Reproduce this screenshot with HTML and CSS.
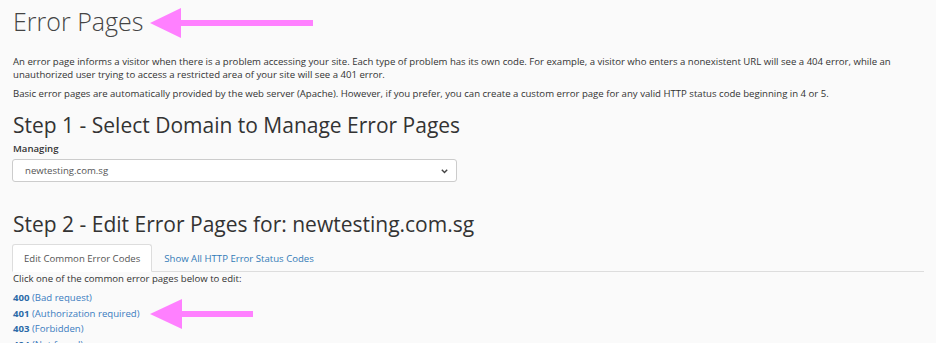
FILE: index.html
```html
<!DOCTYPE html>
<html lang="en">
<head>
    <meta charset="UTF-8">
    <meta name="viewport" content="width=device-width, initial-scale=1.0">
    <title>Error Pages</title>
    <link rel="stylesheet" href="styles.css">
</head>
<body>
    <div class="page">
        <div class="title-row">
            <h1 class="page-title">Error Pages</h1>
            <svg class="arrow arrow-title" width="165" height="30" viewBox="0 0 165 30">
                <polygon points="0,15 31,0 31,12 163,12 163,18 31,18 31,30" fill="#ff80ff"/>
            </svg>
        </div>

        <p class="intro">An error page informs a visitor when there is a problem accessing your site. Each type of problem has its own code. For example, a visitor who enters a nonexistent URL will see a 404 error, while an unauthorized user trying to access a restricted area of your site will see a 401 error.</p>
        <p class="intro">Basic error pages are automatically provided by the web server (Apache). However, if you prefer, you can create a custom error page for any valid HTTP status code beginning in 4 or 5.</p>

        <h2 class="step-title">Step 1 - Select Domain to Manage Error Pages</h2>
        <label class="field-label" for="domain">Managing</label>
        <div class="select-wrap">
            <select class="domain-select" id="domain">
                <option>newtesting.com.sg</option>
            </select>
            <svg class="chevron" width="7" height="5" viewBox="0 0 7 5">
                <path d="M0.8 0.8 L3.5 3.6 L6.2 0.8" fill="none" stroke="#444" stroke-width="1.4"/>
            </svg>
        </div>

        <h2 class="step-title step-two">Step 2 - Edit Error Pages for: newtesting.com.sg</h2>
        <ul class="tabs">
            <li class="tab active">Edit Common Error Codes</li>
            <li class="tab">Show All HTTP Error Status Codes</li>
        </ul>

        <p class="hint">Click one of the common error pages below to edit:</p>
        <ul class="codes">
            <li><a href="#"><b>400</b> (Bad request)</a></li>
            <li class="code-row">
                <a href="#"><b>401</b> (Authorization required)</a>
                <svg class="arrow arrow-code" width="104" height="30" viewBox="0 0 104 30">
                    <polygon points="0,15 32,0 32,12 103,12 103,18 32,18 32,30" fill="#ff80ff"/>
                </svg>
            </li>
            <li><a href="#"><b>403</b> (Forbidden)</a></li>
            <li><a href="#"><b>404</b> (Not found)</a></li>
            <li><a href="#"><b>500</b> (Internal server error)</a></li>
        </ul>
    </div>
</body>
</html>
```

FILE: styles.css
```css
* {
    margin: 0;
    padding: 0;
    box-sizing: border-box;
}

body {
    font-family: 'Open Sans', 'Noto Sans', sans-serif;
    background: #fafafa;
    color: #333;
    font-size: 10px;
    overflow: hidden;
}

.page {
    padding: 0 12px 0 13px;
}

.title-row {
    position: relative;
    height: 44px;
    padding-top: 5px;
}

.page-title {
    font-size: 25px;
    font-weight: 300;
    color: #444;
    line-height: 32px;
}

.arrow {
    position: absolute;
}

.arrow-title {
    left: 137px;
    top: 8px;
}

.intro {
    font-size: 9.6px;
    line-height: 13px;
    margin-top: 11px;
    margin-bottom: 6px;
    color: #333;
}

.intro + .intro {
    margin-top: 0;
}

.step-title {
    font-size: 21px;
    font-weight: 400;
    color: #333;
    line-height: 28px;
    margin-top: 11px;
}

.step-two {
    margin-top: 28px;
}

.field-label {
    display: block;
    font-size: 9.6px;
    font-weight: 600;
    line-height: 14px;
    margin-top: 3px;
}

.select-wrap {
    position: relative;
    width: 445px;
    margin-top: 3px;
    margin-left: -1px;
}

.domain-select {
    appearance: none;
    width: 100%;
    height: 23px;
    padding: 0 12px;
    font-family: inherit;
    font-size: 9.6px;
    color: #555;
    background: #fff;
    border: 1px solid #ccc;
    border-radius: 3px;
}

.chevron {
    position: absolute;
    right: 9px;
    top: 10px;
}

.tabs {
    list-style: none;
    display: flex;
    margin-top: 6px;
    margin-left: -1px;
    border-bottom: 1px solid #ddd;
}

.tab {
    padding: 0 11px;
    height: 28px;
    line-height: 28px;
    font-size: 9.6px;
    color: #337ab7;
    border: 1px solid transparent;
    border-radius: 3px 3px 0 0;
    margin-bottom: -1px;
}

.tab.active {
    background: #fff;
    color: #555;
    border-color: #ddd;
    border-bottom-color: #fff;
}

.hint {
    font-size: 9.6px;
    line-height: 14px;
    margin-top: 0;
}

.codes {
    list-style: none;
    margin-top: 4px;
}

.codes li {
    font-size: 9.6px;
    line-height: 15.5px;
}

.code-row {
    position: relative;
}

.arrow-code {
    left: 137px;
    top: -7px;
}

.codes a {
    color: #3a7cc0;
    text-decoration: none;
}

.codes b {
    font-weight: 700;
    color: #2c6aa8;
}
```
